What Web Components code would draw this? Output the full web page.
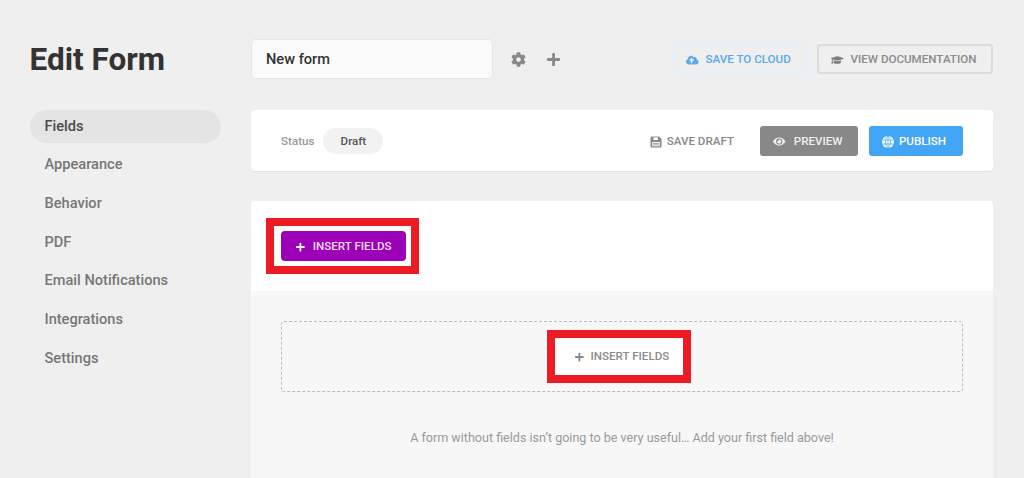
<!DOCTYPE html>
<html lang="en"><head><meta charset="utf-8"><title>Edit Form</title>
<style>
html,body{margin:0;height:478px;overflow:hidden;background:#efefef;font-family:Roboto,"Liberation Sans",sans-serif}
</style></head><body>
<edit-page>
  <side-nav slot="side">
    <nav-item active>Fields</nav-item>
    <nav-item>Appearance</nav-item>
    <nav-item>Behavior</nav-item>
    <nav-item>PDF</nav-item>
    <nav-item>Email Notifications</nav-item>
    <nav-item>Integrations</nav-item>
    <nav-item>Settings</nav-item>
  </side-nav>
  <top-bar slot="main"></top-bar>
  <status-card slot="main"></status-card>
  <fields-card slot="main"></fields-card>
</edit-page>
<script>
const P={
plus:[448,'M416 208H272V64c0-17.67-14.33-32-32-32h-32c-17.67 0-32 14.33-32 32v144H32c-17.67 0-32 14.33-32 32v32c0 17.67 14.33 32 32 32h144v144c0 17.67 14.33 32 32 32h32c17.67 0 32-14.33 32-32V304h144c17.67 0 32-14.33 32-32v-32c0-17.67-14.33-32-32-32z'],
cog:[512,'M487.4 315.7l-42.6-24.6c4.3-23.2 4.3-47 0-70.2l42.6-24.6c4.9-2.8 7.1-8.6 5.5-14-11.1-35.6-30-67.8-54.7-94.6-3.8-4.1-10-5.1-14.8-2.3L380.8 110c-17.9-15.4-38.5-27.3-60.8-35.1V25.8c0-5.6-3.9-10.5-9.4-11.7-36.7-8.2-74.3-7.8-109.2 0-5.5 1.2-9.4 6.1-9.4 11.7V75c-22.2 7.9-42.8 19.8-60.8 35.1L88.7 85.5c-4.9-2.8-11-1.9-14.8 2.3-24.7 26.7-43.6 58.9-54.7 94.6-1.7 5.4.6 11.2 5.5 14L67.3 221c-4.3 23.2-4.3 47 0 70.2l-42.6 24.6c-4.9 2.8-7.1 8.6-5.5 14 11.1 35.6 30 67.8 54.7 94.6 3.8 4.1 10 5.1 14.8 2.3l42.6-24.6c17.9 15.4 38.5 27.3 60.8 35.1v49.2c0 5.6 3.9 10.5 9.4 11.7 36.7 8.2 74.3 7.8 109.2 0 5.5-1.2 9.4-6.1 9.4-11.7v-49.2c22.2-7.9 42.8-19.8 60.8-35.1l42.6 24.6c4.9 2.8 11 1.9 14.8-2.3 24.7-26.7 43.6-58.9 54.7-94.6 1.5-5.5-.7-11.3-5.6-14.1zM256 336c-44.1 0-80-35.9-80-80s35.9-80 80-80 80 35.9 80 80-35.9 80-80 80z'],
cloud:[640,'M537.6 226.6c4.1-10.7 6.4-22.4 6.4-34.6 0-53-43-96-96-96-19.7 0-38.1 6-53.3 16.2C367 64.2 315.3 32 256 32c-88.4 0-160 71.6-160 160 0 2.7.1 5.4.2 8.1C40.2 219.8 0 273.2 0 336c0 79.5 64.5 144 144 144h368c70.7 0 128-57.3 128-128 0-61.9-44-113.6-102.4-125.4zM393.4 288H328v112c0 8.8-7.2 16-16 16h-48c-8.8 0-16-7.2-16-16V288h-65.4c-14.3 0-21.4-17.2-11.3-27.3l105.4-105.4c6.2-6.2 16.4-6.2 22.6 0l105.4 105.4c10.1 10.1 2.9 27.3-11.3 27.3z'],
cap:[640,'M622.34 153.2L343.4 67.5c-15.2-4.67-31.6-4.67-46.79 0L17.66 153.2c-23.54 7.23-23.54 38.36 0 45.59l48.63 14.94c-10.67 13.19-17.23 29.28-17.88 46.9C38.78 266.15 32 276.11 32 288c0 10.78 5.68 19.85 13.86 25.65L20.33 428.53C18.11 438.52 25.71 448 35.94 448h56.11c10.24 0 17.84-9.48 15.62-19.47L82.14 313.65C90.32 307.85 96 298.78 96 288c0-11.57-6.47-21.25-15.66-26.87.76-15.02 8.44-28.3 20.69-36.72L296.6 284.5c9.06 2.78 26.44 6.25 46.79 0l278.95-85.7c23.55-7.24 23.55-38.36 0-45.6zM352.79 315.09c-28.53 8.76-52.84 3.92-65.59 0l-145.02-44.55L128 384c0 35.35 85.96 64 192 64s192-28.65 192-64l-14.18-113.47-145.03 44.56z'],
eye:[576,'M572.52 241.4C518.29 135.59 410.93 64 288 64S57.68 135.64 3.48 241.41a32.35 32.35 0 0 0 0 29.19C57.71 376.41 165.07 448 288 448s230.32-71.64 284.52-177.41a32.35 32.35 0 0 0 0-29.19zM288 400a144 144 0 1 1 144-144 143.93 143.93 0 0 1-144 144zm0-240a95.31 95.31 0 0 0-25.31 3.79 47.85 47.85 0 0 1-66.9 66.9A95.78 95.78 0 1 0 288 160z']
};
function def(name,css,html){
  customElements.define(name,class extends HTMLElement{
    constructor(){super();this.attachShadow({mode:'open'}).innerHTML='<style>'+css+'</style>'+(typeof html==='function'?html(this):html);}
  });
}
def('ui-icon',':host{display:inline-flex;align-items:center;justify-content:center;flex:none}svg{display:block;height:var(--i,12px);fill:currentColor}',h=>{
  const n=h.getAttribute('name');
  if(n==='globe')return '<svg viewBox="0 0 24 24"><circle cx="12" cy="12" r="12"/><g fill="none" stroke="#42a5f5" stroke-width="1.5"><ellipse cx="12" cy="12" rx="5" ry="12"/><path d="M1 8h22M1 16h22M12 0v24"/></g></svg>';
  if(n==='save')return '<svg viewBox="0 0 24 24"><path fill-rule="evenodd" d="M3 1h15l5 5v15a2 2 0 0 1-2 2H3a2 2 0 0 1-2-2V3a2 2 0 0 1 2-2zM7 2.5V8h9V2.5zM4.5 12v8.5h15V12z"/><path d="M6 14h12v1.6H6zM6 17h12v1.6H6z"/></svg>';
  const [w,d]=P[n];return '<svg viewBox="0 0 '+w+' 512"><path d="'+d+'"/></svg>';
});
def('edit-page',':host{display:grid;grid-template-columns:191px 742px;column-gap:30px;padding:0 0 0 30px;height:478px;overflow:hidden;box-sizing:border-box}.t{margin:0;font:700 31.5px/38px Roboto,sans-serif;color:#333;padding-top:41px;height:68.6px;margin-left:-.5px}.m{display:flex;flex-direction:column}',
 '<div><h1 class="t">Edit Form</h1><slot name="side"></slot></div><div class="m"><slot name="main"></slot></div>');
def('side-nav',':host{display:block}','<slot></slot>');
def('nav-item',':host{display:flex;align-items:center;box-sizing:border-box;height:33px;margin:0 0 5.72px -.5px;padding:0 15px;border-radius:16.5px;font:500 14.6px/33px Roboto,sans-serif;color:#777}:host([active]){background:#e4e4e4;color:#4a4a4a}','<slot></slot>');
def('top-bar',':host{display:flex;align-items:center;height:40px;margin-top:39px;margin-bottom:31px}.inp{box-sizing:border-box;width:242px;height:40px;background:#fafafa;border:1px solid #e6e6e6;border-radius:4px;padding:1px 14px 0;font:500 14.6px/37px Roboto,sans-serif;color:#333}.ic{color:#888;--i:15px;margin-left:18px;display:flex}.ic+.ic{margin-left:21px}.sp{flex:1}.b{display:inline-flex;align-items:center;box-sizing:border-box;height:30px;padding-top:1px;border-radius:4px;font:500 11.6px/1 Roboto,sans-serif;text-transform:uppercase;--i:10px}.cl{width:135px;padding-left:12px;gap:7px;color:#58a9f0;border:2px solid #e2f1fd;margin-right:10px}.doc{width:176px;padding-left:12px;gap:7px;color:#8a8a8a;border:2px solid #dcdcdc}.doc ui-icon{color:#7d7d7d}',
 '<div class="inp">New form</div><ui-icon class="ic" name="cog"></ui-icon><ui-icon class="ic" name="plus"></ui-icon><div class="sp"></div><div class="b cl"><ui-icon name="cloud"></ui-icon>Save to cloud</div><div class="b doc"><ui-icon name="cap"></ui-icon>View documentation</div>');
def('status-card',':host{display:flex;align-items:center;box-sizing:border-box;height:61px;margin-bottom:30px;background:#fff;border-radius:4px;box-shadow:0 1px 1px rgba(0,0,0,.06);padding:0 30.5px 0 30px}.l{font:500 11.6px Roboto,sans-serif;color:#999;margin-right:9px}.d{display:flex;align-items:center;justify-content:center;width:60px;height:26px;border-radius:13px;background:#f2f2f2;font:500 11.6px Roboto,sans-serif;color:#555}.sp{flex:1}.b{display:inline-flex;align-items:center;box-sizing:border-box;height:29.5px;margin-top:1px;padding-top:1px;border-radius:3px;font:500 11.6px/1 Roboto,sans-serif;text-transform:uppercase}.sv{color:#888;gap:5px;margin-right:26px;--i:12px}.pv{width:98px;background:#888;color:#eee;justify-content:center;gap:8px;margin-right:10.5px;padding-right:2px;--i:11px}.pb{width:94px;background:#42a5f5;color:#fff;justify-content:center;gap:5px;padding-right:3px;--i:12px}',
 '<span class="l">Status</span><span class="d">Draft</span><div class="sp"></div><div class="b sv"><ui-icon name="save"></ui-icon>Save draft</div><div class="b pv"><ui-icon name="eye"></ui-icon>Preview</div><div class="b pb"><ui-icon name="globe"></ui-icon>Publish</div>');
def('red-mark',':host{display:inline-block;position:relative;isolation:isolate}.o{position:absolute;z-index:-1;box-sizing:border-box;inset:var(--o);border:8px solid #ed1c24;background:#fff}','<span class="o"></span><slot></slot>');
def('insert-button',':host{display:inline-flex;align-items:center;gap:8px;box-sizing:border-box;height:30px;padding:1px 15px 0;border-radius:4px;font:500 11.6px/1 Roboto,sans-serif;text-transform:uppercase;--i:10px}:host([solid]){background:#9c00b7;color:#f3dff6}:host([ghost]){color:#8c8c8c;padding:0 17px;gap:7px}ui-icon{color:#fff}:host([ghost]) ui-icon{color:#888}','<ui-icon name="plus"></ui-icon><slot></slot>');
def('fields-card',':host{display:block;box-sizing:border-box;height:277px;border-radius:4px 4px 0 0;background:#f7f7f7;overflow:hidden}.top{background:#fff;height:90px;padding:30px 0 0 30px;box-sizing:border-box}.top red-mark{--o:-13px -13px -13px -15px}.body{padding:30px 30px 0}.dash{display:flex;align-items:center;justify-content:center;box-sizing:border-box;height:71px;border:1px dashed #bbb;border-radius:3px}.dash red-mark{--o:-12px -5px -11px -11px}.msg{margin:38px 0 0;text-align:center;font:400 12.55px/16px Roboto,sans-serif;color:#999}',
 '<div class="top"><red-mark><insert-button solid>Insert fields</insert-button></red-mark></div><div class="body"><div class="dash"><red-mark><insert-button ghost>Insert fields</insert-button></red-mark></div><p class="msg">A form without fields isn\u2019t going to be very useful\u2026 Add your first field above!</p></div>');
</script>
</body></html>
